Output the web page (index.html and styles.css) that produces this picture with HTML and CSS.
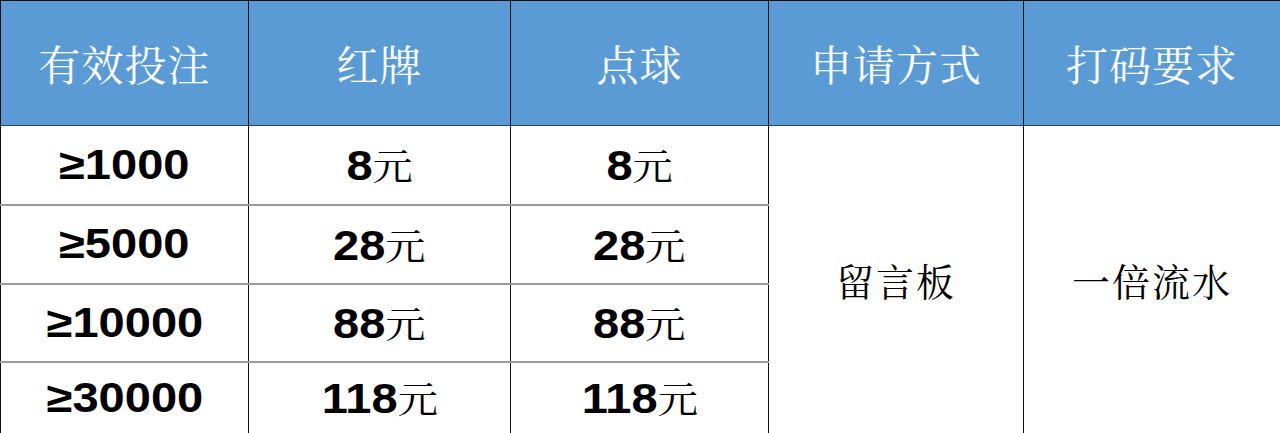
FILE: index.html
```html
<!DOCTYPE html>
<html lang="zh">
<head>
<meta charset="utf-8">
<link rel="stylesheet" href="styles.css">
</head>
<body>
<table class="tbl">
  <colgroup>
    <col class="c1"><col class="c2"><col class="c3"><col class="c4"><col class="c5">
  </colgroup>
  <thead>
    <tr class="head">
      <th>有效投注</th><th>红牌</th><th>点球</th><th>申请方式</th><th>打码要求</th>
    </tr>
  </thead>
  <tbody>
    <tr class="r1">
      <td class="num"><span class="w">≥1000</span></td>
      <td class="num"><span class="w">8<span class="yuan">元</span></span></td>
      <td class="num"><span class="w">8<span class="yuan">元</span></span></td>
      <td class="cn" rowspan="4">留言板</td>
      <td class="cn" rowspan="4">一倍流水</td>
    </tr>
    <tr class="r2">
      <td class="num"><span class="w">≥5000</span></td>
      <td class="num"><span class="w">28<span class="yuan">元</span></span></td>
      <td class="num"><span class="w">28<span class="yuan">元</span></span></td>
    </tr>
    <tr class="r3">
      <td class="num"><span class="w">≥10000</span></td>
      <td class="num"><span class="w">88<span class="yuan">元</span></span></td>
      <td class="num"><span class="w">88<span class="yuan">元</span></span></td>
    </tr>
    <tr class="r4">
      <td class="num"><span class="w">≥30000</span></td>
      <td class="num"><span class="w">118<span class="yuan">元</span></span></td>
      <td class="num"><span class="w">118<span class="yuan">元</span></span></td>
    </tr>
  </tbody>
</table>
</body>
</html>
```
FILE: styles.css
```css
html, body {
  margin: 0;
  padding: 0;
  background: #ffffff;
}
.tbl {
  width: 1280px;
  height: 433px;
  border-collapse: collapse;
  table-layout: fixed;
  border: 1px solid #111;
}
.c1 { width: 248px; }
.c2 { width: 262px; }
.c3 { width: 258px; }
.c4 { width: 255px; }
.c5 { width: 257px; }
.tbl th, .tbl td {
  padding: 0;
  text-align: center;
  vertical-align: middle;
  border-left: 1px solid #111;
  border-right: 1px solid #111;
}
.head { height: 125px; }
.head th {
  background: #5b9bd5;
  color: #ffffff;
  font-family: "Noto Serif CJK SC", "Noto Sans CJK SC", serif;
  font-weight: 400;
  font-size: 42px;
  letter-spacing: 1px;
  border-top: 1px solid #111;
  border-bottom: 1px solid #2f3f55;
}
.r1 { height: 79px; }
.r2 { height: 79px; }
.r3 { height: 78px; }
.r4 { height: 72px; }
.r1 td.num, .r2 td.num, .r3 td.num {
  border-bottom: 2px solid #999;
}
.num {
  font-family: "Liberation Sans", Arial, sans-serif;
  font-weight: 700;
  font-size: 42px;
  color: #000;
}
.w {
  display: inline-block;
  transform: scaleX(1.12);
}
.yuan {
  font-family: "Noto Serif CJK SC", "Noto Sans CJK SC", sans-serif;
  font-weight: 400;
  font-size: 36px;
}
.cn {
  font-family: "Noto Serif CJK SC", "Noto Sans CJK SC", sans-serif;
  font-weight: 400;
  font-size: 38px;
  color: #000;
  letter-spacing: 2px;
}
```
